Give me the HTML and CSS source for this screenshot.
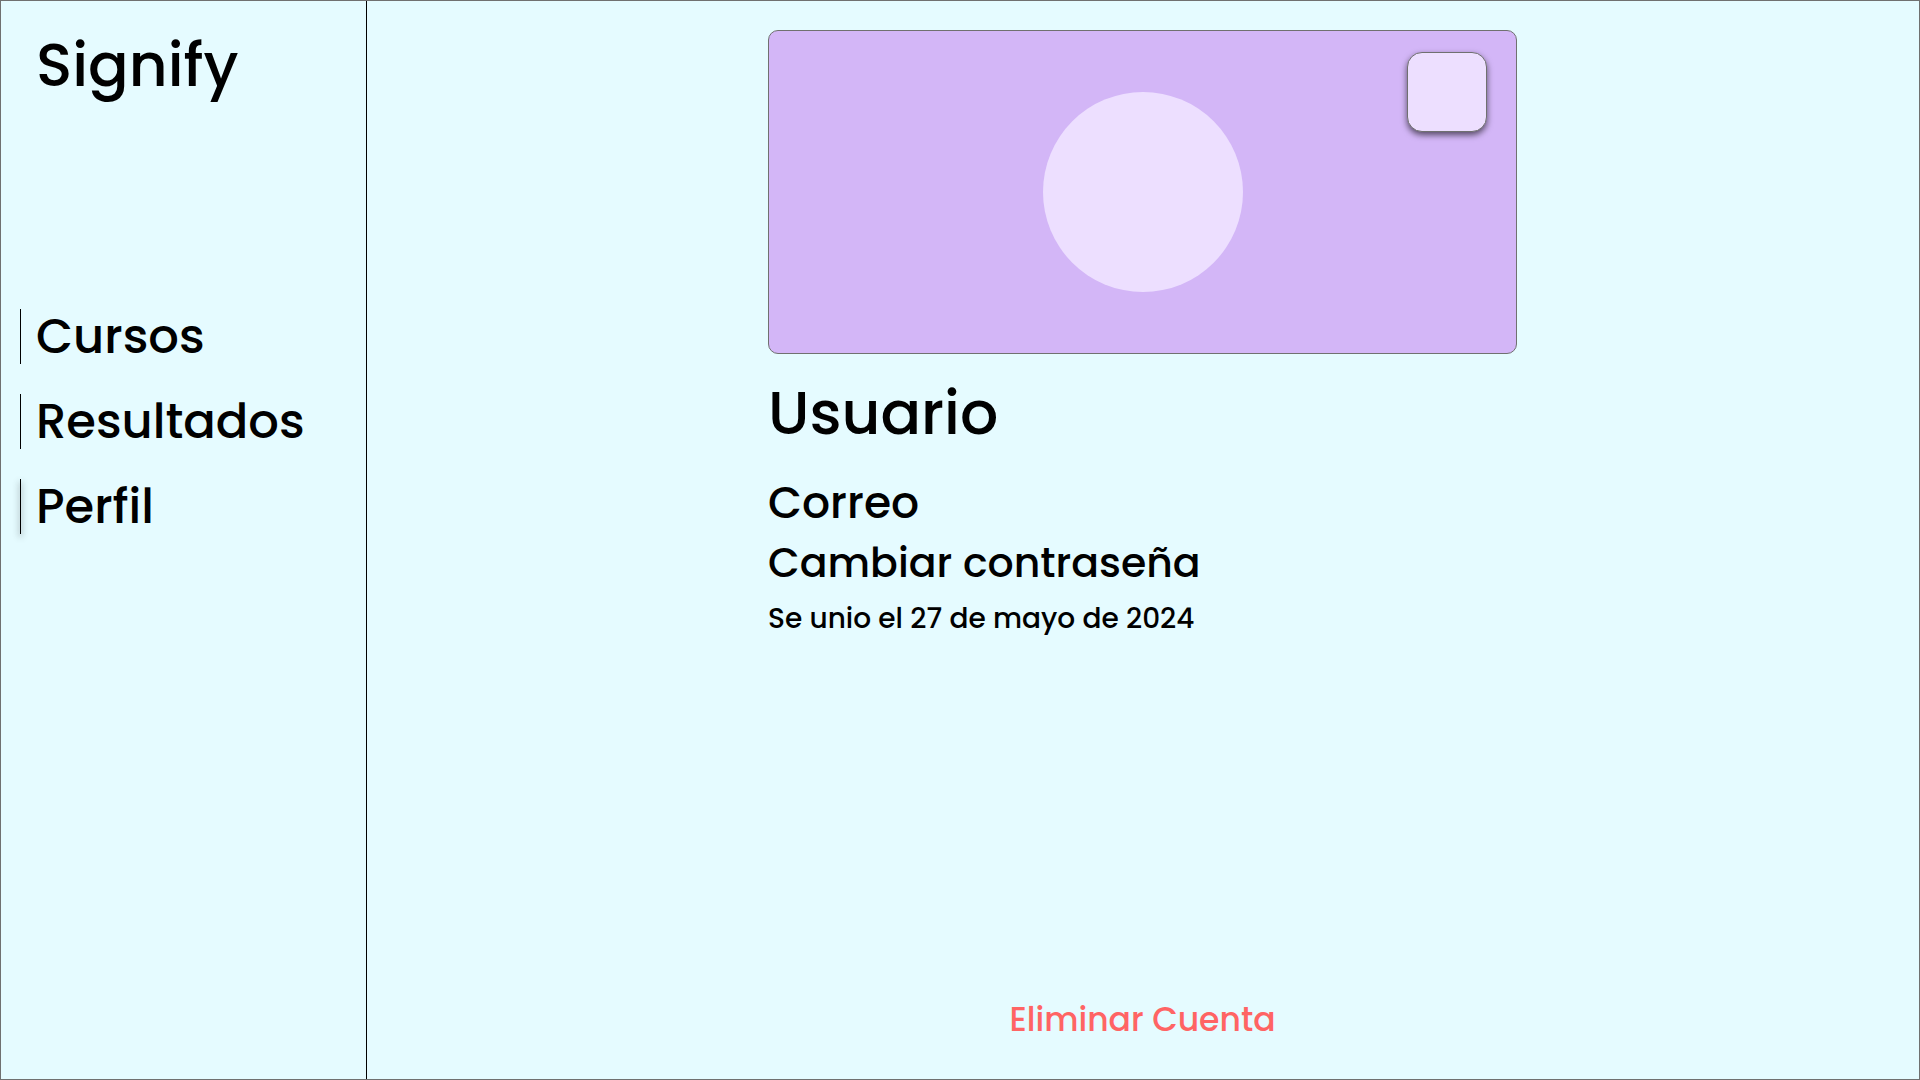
FILE: index.html
```html
<!DOCTYPE html>
<html lang="es">
<head>
  <meta charset="utf-8">
  <meta name="viewport" content="width=device-width, initial-scale=1">
  <title>Signify</title>
  <link rel="stylesheet" href="styles.css">
</head>
<body>
  <div class="app">
    <aside class="sidebar">
      <a class="brand" href="#">Signify</a>
      <nav class="menu">
        <a class="menu-link" href="#">Cursos</a>
        <a class="menu-link" href="#">Resultados</a>
        <a class="menu-link menu-link-active" href="#" aria-current="page">Perfil</a>
      </nav>
    </aside>
    <main class="main">
      <section class="profile">
        <div class="cover">
          <div class="avatar"></div>
          <button class="edit" type="button" aria-label="Editar"></button>
        </div>
        <h1 class="name">Usuario</h1>
        <p class="email">Correo</p>
        <button class="password" type="button">Cambiar contraseña</button>
        <p class="joined">Se unio el 27 de mayo de 2024</p>
      </section>
      <button class="delete" type="button">Eliminar Cuenta</button>
    </main>
  </div>
</body>
</html>
```

FILE: styles.css
```css
* {
  box-sizing: border-box;
}

body {
  margin: 0;
  background: #e5fbff;
  color: #000;
  font-family: Poppins, Inter, sans-serif;
  font-weight: 500;
}

button {
  padding: 0;
  border: 0;
  background: none;
  color: inherit;
  font: inherit;
  cursor: pointer;
}

a {
  color: inherit;
  text-decoration: none;
}

.app {
  display: grid;
  grid-template-columns: 366px 1fr;
  min-height: 100vh;
  border: 1px solid #707070;
}

.sidebar {
  display: flex;
  flex-direction: column;
  gap: 200px;
  padding: 20px 19px;
  border-right: 1px solid #000;
}

.brand {
  padding-left: 16px;
  font-size: 60px;
  line-height: 88px;
}

.menu {
  display: flex;
  flex-direction: column;
  gap: 30px;
}

.menu-link {
  display: flex;
  gap: 15px;
  font-size: 48px;
  line-height: 55px;
}

.menu-link::before {
  content: "";
  flex: none;
  width: 1px;
  background: #000;
}

.menu-link-active::before {
  box-shadow: 0 3px 6px rgba(0, 0, 0, 0.8);
}

.main {
  display: flex;
  flex-direction: column;
  align-items: center;
  justify-content: space-between;
  padding: 29px 25px 35px 24px;
}

.profile {
  display: flex;
  flex-direction: column;
  align-items: flex-start;
  width: 100%;
  max-width: 749px;
}

.cover {
  position: relative;
  display: flex;
  align-items: center;
  justify-content: center;
  width: 100%;
  min-height: 324px;
  border: 1px solid #707070;
  border-radius: 10px;
  background: #d3b6f7;
}

.avatar {
  width: 200px;
  height: 200px;
  border-radius: 50%;
  background: #eddfff;
}

.edit {
  position: absolute;
  top: 21px;
  right: 29px;
  width: 80px;
  height: 80px;
  border: 1px solid #707070;
  border-radius: 15px;
  background: #eddfff;
  box-shadow: 0 3px 6px rgba(0, 0, 0, 0.6);
}

.name {
  margin: 17px 0 16px;
  font-size: 60px;
  font-weight: 500;
  line-height: 84px;
}

.email {
  margin: 0;
  font-size: 44px;
  line-height: 64px;
}

.password {
  font-size: 41px;
  line-height: 56px;
}

.joined {
  margin: 0;
  font-size: 28px;
  line-height: 56px;
}

.delete {
  color: #ff6464;
  font-size: 33px;
  line-height: 48px;
}
```
